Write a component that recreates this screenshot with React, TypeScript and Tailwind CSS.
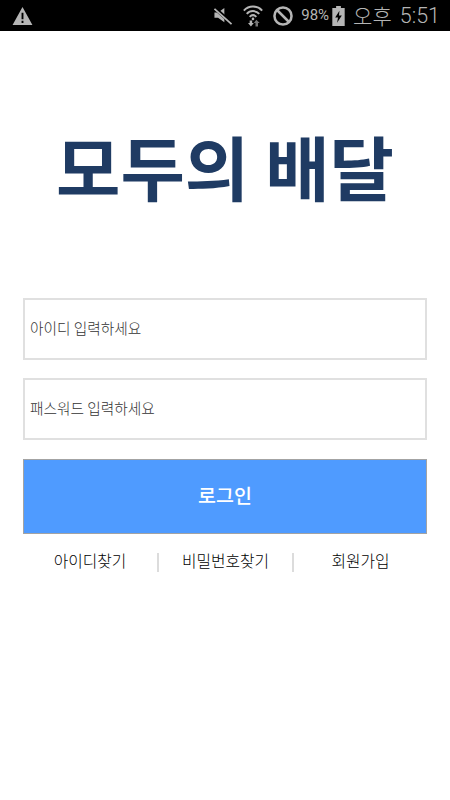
const KR = "font-['Noto_Sans_CJK_KR',_'Noto_Sans',_sans-serif]";

function StatusBar() {
  return (
    <div className="flex h-[31px] items-center justify-between bg-black pl-[12px] pr-[10px] text-[#b5b5b5]">
      <svg width="21" height="18" viewBox="0 0 22 19">
        <path fill="#b5b5b5" fillRule="evenodd" d="M11 0 L21.5 19 H0.5 Z M10 6 V13 H12 V6 Z M10 14.5 V17 H12 V14.5 Z" />
      </svg>
      <div className="flex items-center">
        <svg width="20" height="18" viewBox="0 0 21 20" className="mr-[10px]">
          <path fill="#b5b5b5" d="M1 6 H5 L12 1 V17 L5 12 H1 Z" />
          <path stroke="#000" strokeWidth="4" d="M1 1 L20 18" />
          <path stroke="#b5b5b5" strokeWidth="2" d="M1 2 L20 19" />
        </svg>
        <svg width="20" height="24" viewBox="0 0 24 25" fill="none" className="mr-[10px]">
          <path stroke="#b5b5b5" strokeWidth="2.4" d="M1 6 C7 -0.5 17 -0.5 23 6" />
          <path stroke="#b5b5b5" strokeWidth="2.4" d="M4.5 10 C8.5 5.5 15.5 5.5 19.5 10" />
          <path stroke="#b5b5b5" strokeWidth="2.4" d="M8 13.5 C10.5 11 13.5 11 16 13.5" />
          <circle cx="12" cy="16" r="1.6" fill="#b5b5b5" />
          <path fill="#b5b5b5" d="M8 18 H11 V21 H13 L9.5 25 L6 21 H8 Z" />
          <path fill="#777" d="M16 17 L20 21 H18 V25 H15 V21 H13 Z" />
        </svg>
        <svg width="20" height="20" viewBox="0 0 22 22" fill="none" className="mr-[8px]">
          <circle cx="11" cy="11" r="9.4" stroke="#b5b5b5" strokeWidth="2.8" />
          <path stroke="#b5b5b5" strokeWidth="2.8" d="M4.4 4.4 L17.6 17.6" />
        </svg>
        <span className="mr-[3px] font-['Roboto',_sans-serif] text-[15px] leading-none">98%</span>
        <svg width="13" height="20" viewBox="0 0 13 21" className="mr-[8px]">
          <path fill="#b5b5b5" fillRule="evenodd" d="M4 0 H9 V2 H13 V21 H0 V2 H4 Z M7.5 5 L3 12 H6 L5 17.5 L10 10 H7 Z" />
        </svg>
        <span className={`${KR} mr-[8px] text-[21px] font-light leading-none`}>오후</span>
        <span className="font-['Roboto',_sans-serif] text-[21.5px] font-light leading-none">5:51</span>
      </div>
    </div>
  );
}

function Field({ placeholder, type }: { placeholder: string; type: string }) {
  return (
    <input
      type={type}
      placeholder={placeholder}
      className={`${KR} h-[62px] w-full border-2 border-[#e0e0e0] bg-white px-[5px] pb-[3px] text-[14.7px] font-light text-[#333] outline-none placeholder:text-[#333]`}
    />
  );
}

export default function App() {
  return (
    <div className="h-[800px] w-[450px] overflow-hidden bg-white">
      <StatusBar />
      <h1 className={`${KR} mt-[90px] text-center text-[70px] font-bold leading-[90px] text-[#1f3b63]`}>
        모두의 배달
      </h1>
      <div className="mt-[87px] flex flex-col px-[23px]">
        <Field type="text" placeholder="아이디 입력하세요" />
        <div className="mt-[18px]">
          <Field type="password" placeholder="패스워드 입력하세요" />
        </div>
        <button className={`${KR} mt-[19px] h-[75px] w-full border border-[#a3a3a3] bg-[#4f9bff] pb-[3px] text-[19.5px] font-medium text-white`}>
          로그인
        </button>
        <div className={`${KR} mt-[18px] flex h-[20px] items-center text-[15.8px] font-light text-black`}>
          <div className="w-[134px] pb-[3px] text-center leading-[18px]">아이디찾기</div>
          <div className="flex h-[19px] w-[137px] items-center justify-center border-x-2 border-[#dcdcdc] pb-[3px] leading-[18px]">
            비밀번호찾기
          </div>
          <div className="flex-1 pb-[3px] text-center leading-[18px]">회원가입</div>
        </div>
      </div>
    </div>
  );
}
